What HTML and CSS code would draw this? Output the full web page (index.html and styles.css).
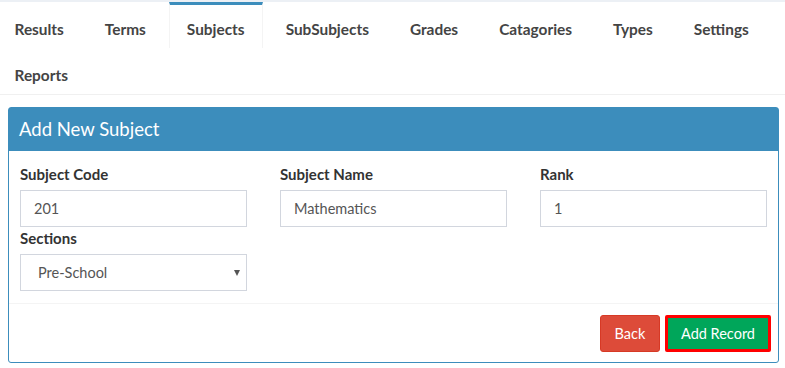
FILE: index.html
```html
<!DOCTYPE html>
<html lang="en">
<head>
  <meta charset="UTF-8" />
  <meta name="viewport" content="width=device-width, initial-scale=1" />
  <title>Add New Subject</title>
  <link rel="stylesheet" href="styles.css">
</head>
<body>
  <div class="tabs-box">
    <ul class="nav-tabs">
      <li><a href="#">Results</a></li>
      <li><a href="#">Terms</a></li>
      <li class="active"><a href="#">Subjects</a></li>
      <li><a href="#">SubSubjects</a></li>
      <li><a href="#">Grades</a></li>
      <li><a href="#">Catagories</a></li>
      <li><a href="#">Types</a></li>
      <li><a href="#">Settings</a></li>
      <li><a href="#">Reports</a></li>
    </ul>
  </div>

  <div class="panel">
    <div class="panel-heading">Add New Subject</div>
    <form class="panel-body">
      <div class="form-group">
        <label for="code">Subject Code</label>
        <input type="text" id="code" class="form-control" value="201" />
      </div>
      <div class="form-group">
        <label for="name">Subject Name</label>
        <input type="text" id="name" class="form-control" value="Mathematics" />
      </div>
      <div class="form-group">
        <label for="rank">Rank</label>
        <input type="text" id="rank" class="form-control" value="1" />
      </div>
      <div class="form-group">
        <label for="section">Sections</label>
        <div class="select-wrap">
          <select id="section" class="form-control">
            <option>Pre-School</option>
            <option>Primary</option>
            <option>Secondary</option>
          </select>
        </div>
      </div>
    </form>
    <div class="panel-footer">
      <button type="button" class="btn btn-danger">Back</button>
      <button type="button" class="btn btn-success">Add Record</button>
    </div>
  </div>
</body>
</html>
```

FILE: styles.css
```css
body {
  font-family: Lato, "Open Sans", sans-serif;
  margin: 0;
  background: #fff;
  color: #333;
  font-size: 14px;
}

.tabs-box {
  border-top: 2px solid #ecf0f5;
  border-bottom: 1px solid #f0f0f0;
  margin-bottom: 12px;
}

.nav-tabs {
  list-style: none;
  margin: 0 0 0 -3.5px;
  padding: 0;
  display: flex;
  flex-wrap: wrap;
  column-gap: 5px;
}

.nav-tabs li {
  border-top: 3px solid transparent;
  border-left: 1px solid transparent;
  border-right: 1px solid transparent;
}

.nav-tabs li.active {
  border-top-color: #3c8dbc;
  border-left-color: #f4f4f4;
  border-right-color: #f4f4f4;
}

.nav-tabs a {
  display: block;
  padding: 14px 17px 9px;
  line-height: 20px;
  font-size: 15.4px;
  font-weight: bold;
  color: #444;
  text-decoration: none;
}

.panel {
  margin: 0 6px 0 8px;
  border: 1px solid #3c8dbc;
  border-radius: 3px;
}

.panel-heading {
  background: #3c8dbc;
  color: #fff;
  font-size: 18.5px;
  height: 43px;
  line-height: 43px;
  padding: 0 10px;
}

.panel-body {
  display: grid;
  grid-template-columns: repeat(3, 227px);
  column-gap: 33px;
  padding: 13px 11px 12px;
}

label {
  display: block;
  font-size: 15px;
  font-weight: bold;
  line-height: 20px;
  margin-bottom: 6px;
}

.form-group + .form-group + .form-group + .form-group label {
  margin-top: 1px;
}

.form-control {
  display: block;
  box-sizing: border-box;
  width: 100%;
  height: 37px;
  padding: 6px 13px;
  border: 1px solid #d2d6de;
  border-radius: 0;
  background: #fff;
  font-family: inherit;
  font-size: 14.5px;
  color: #555;
}

.select-wrap {
  position: relative;
}

select.form-control {
  appearance: none;
  padding-left: 17px;
}

.select-wrap::after {
  content: "";
  position: absolute;
  right: 7px;
  top: 16px;
  border-left: 3px solid transparent;
  border-right: 3px solid transparent;
  border-top: 6px solid #555;
}

.panel-footer {
  border-top: 1px solid #f4f4f4;
  padding: 11px 7px 10px;
  display: flex;
  justify-content: flex-end;
  gap: 5px;
}

.btn {
  font-family: inherit;
  font-size: 14.5px;
  color: #fff;
  border-radius: 3px;
  cursor: pointer;
  height: 37px;
}

.btn-danger {
  background: #dd4b39;
  border: 1px solid #d73925;
  width: 60px;
}

.btn-success {
  background: #00a65a;
  border: 3px solid #ff0000;
  border-radius: 2px;
  width: 106px;
}
```
